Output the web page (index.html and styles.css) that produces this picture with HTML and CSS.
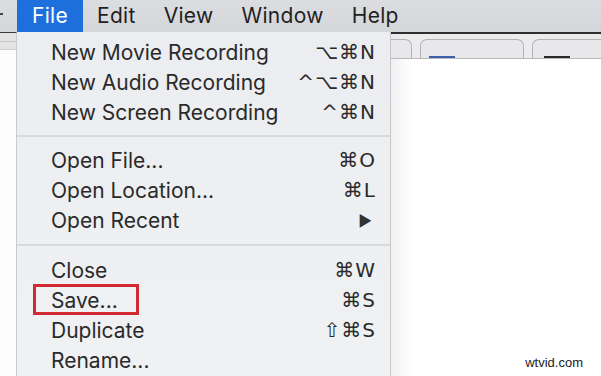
FILE: index.html
```html
<!DOCTYPE html>
<html lang="en">
<head>
<meta charset="UTF-8">
<meta name="viewport" content="width=device-width, initial-scale=1.0">
<title>File menu</title>
<link rel="stylesheet" href="styles.css">
</head>
<body>
<div class="menubar">
    <span class="apple-edge"></span>
    <span class="menubar-item active">File</span>
    <span class="menubar-item">Edit</span>
    <span class="menubar-item">View</span>
    <span class="menubar-item">Window</span>
    <span class="menubar-item">Help</span>
</div>
<div class="desktop">
    <div class="left-window">
        <div class="left-toolbar"></div>
    </div>
    <div class="dropdown">
        <div class="menu-row"><span>New Movie Recording</span><span class="keys">⌥⌘N</span></div>
        <div class="menu-row"><span>New Audio Recording</span><span class="keys">^⌥⌘N</span></div>
        <div class="menu-row"><span>New Screen Recording</span><span class="keys">^⌘N</span></div>
        <div class="separator"></div>
        <div class="menu-row"><span>Open File...</span><span class="keys">⌘O</span></div>
        <div class="menu-row"><span>Open Location...</span><span class="keys">⌘L</span></div>
        <div class="menu-row"><span>Open Recent</span><span class="arrow">▶</span></div>
        <div class="separator wide"></div>
        <div class="menu-row"><span>Close</span><span class="keys">⌘W</span></div>
        <div class="menu-row"><span class="marked">Save...</span><span class="keys">⌘S</span></div>
        <div class="menu-row"><span>Duplicate</span><span class="keys">⇧⌘S</span></div>
        <div class="menu-row"><span>Rename...</span><span class="keys"></span></div>
    </div>
    <div class="window">
        <div class="tabbar">
            <div class="tab tab-cut"></div>
            <div class="tab"><span class="tab-mark blue"></span></div>
            <div class="tab tab-last"><span class="tab-mark dark"></span></div>
        </div>
        <div class="window-body"></div>
    </div>
</div>
<div class="watermark">wtvid.com</div>
</body>
</html>
```

FILE: styles.css
```css
*, *::before, *::after{
    box-sizing: border-box;
}
body{
    margin: 0;
    width: 601px;
    height: 376px;
    overflow: hidden;
    font-family: Inter, "Liberation Sans", "DejaVu Sans", sans-serif;
    background: white;
    position: relative;
}
.menubar{
    display: flex;
    height: 32px;
    background: linear-gradient(#dcdde0, #d5d6d9);
    font-size: 21px;
    letter-spacing: 0.3px;
    color: #1f1f1f;
}
.apple-edge{
    width: 17px;
    position: relative;
}
.apple-edge::before{
    content: "";
    position: absolute;
    left: 0;
    top: 13px;
    width: 3px;
    height: 2px;
    background: #444;
}
.menubar-item{
    padding: 0 14px;
    line-height: 31px;
}
.menubar-item.active{
    padding: 0 15px;
    background: #1d6fdc;
    color: white;
}
.desktop{
    display: flex;
    height: 344px;
}
.left-window{
    flex: none;
    width: 17px;
    border-top: 1px solid #3a3a3a;
    border-right: 1px solid #c9cacc;
    background: #fdfdfd;
}
.left-toolbar{
    height: 17px;
    background: #e4e4e5;
    border-bottom: 1px solid #cfcfcf;
    position: relative;
}
.left-toolbar::before{
    content: "";
    position: absolute;
    left: 0;
    right: 0;
    top: 8px;
    border-top: 1px solid #c2c2c2;
}
.dropdown{
    flex: none;
    width: 374px;
    padding-top: 5px;
    background: linear-gradient(#ebedf0, #eff1f3);
    border-right: 1px solid #c6c7c9;
    font-size: 21px;
    color: #2a2a2a;
}
.menu-row{
    display: flex;
    justify-content: space-between;
    align-items: center;
    height: 30px;
    padding: 0 14px 0 34px;
}
.keys{
    font-family: "DejaVu Sans", sans-serif;
    font-size: 20px;
    letter-spacing: 1px;
}
.arrow{
    font-size: 15px;
    margin-right: 4px;
    color: #333;
}
.separator{
    margin: 8px 0;
    border-top: 2px solid #d8d9db;
}
.separator.wide{
    margin: 9px 0;
}
.marked{
    position: relative;
}
.marked::after{
    content: "";
    position: absolute;
    left: -18px;
    top: -4px;
    width: 106px;
    height: 31px;
    border: 3px solid #d12a33;
}
.window{
    flex: 1;
    min-width: 0;
    display: flex;
    flex-direction: column;
    border-top: 2px solid #2e2e2e;
}
.tabbar{
    display: flex;
    align-items: flex-end;
    gap: 8px;
    height: 25px;
    background: #ebebed;
    border-bottom: 1px solid #b9b9bb;
    padding-top: 6px;
    overflow: hidden;
}
.tab{
    position: relative;
    flex: none;
    width: 104px;
    height: 19px;
    background: #e8e8ea;
    border: 1px solid #b4b4b6;
    border-bottom: none;
    border-radius: 7px 7px 0 0;
}
.tab-cut{
    width: 21px;
    border-left: none;
    border-radius: 0 7px 0 0;
}
.tab-last{
    flex: 1;
    border-right: none;
    border-radius: 7px 0 0 0;
}
.tab-mark{
    position: absolute;
    bottom: 0;
    left: 8px;
    width: 26px;
    height: 2px;
}
.tab-mark.blue{
    background: #3c5fa8;
}
.tab-mark.dark{
    left: 11px;
    background: #2a2a2a;
}
.window-body{
    flex: 1;
    background: linear-gradient(90deg, #f1f1f1, #ffffff 22px);
}
.watermark{
    position: absolute;
    right: 18px;
    bottom: 6px;
    font-family: "Liberation Sans", Arial, sans-serif;
    font-size: 13px;
    color: #222;
}
```
